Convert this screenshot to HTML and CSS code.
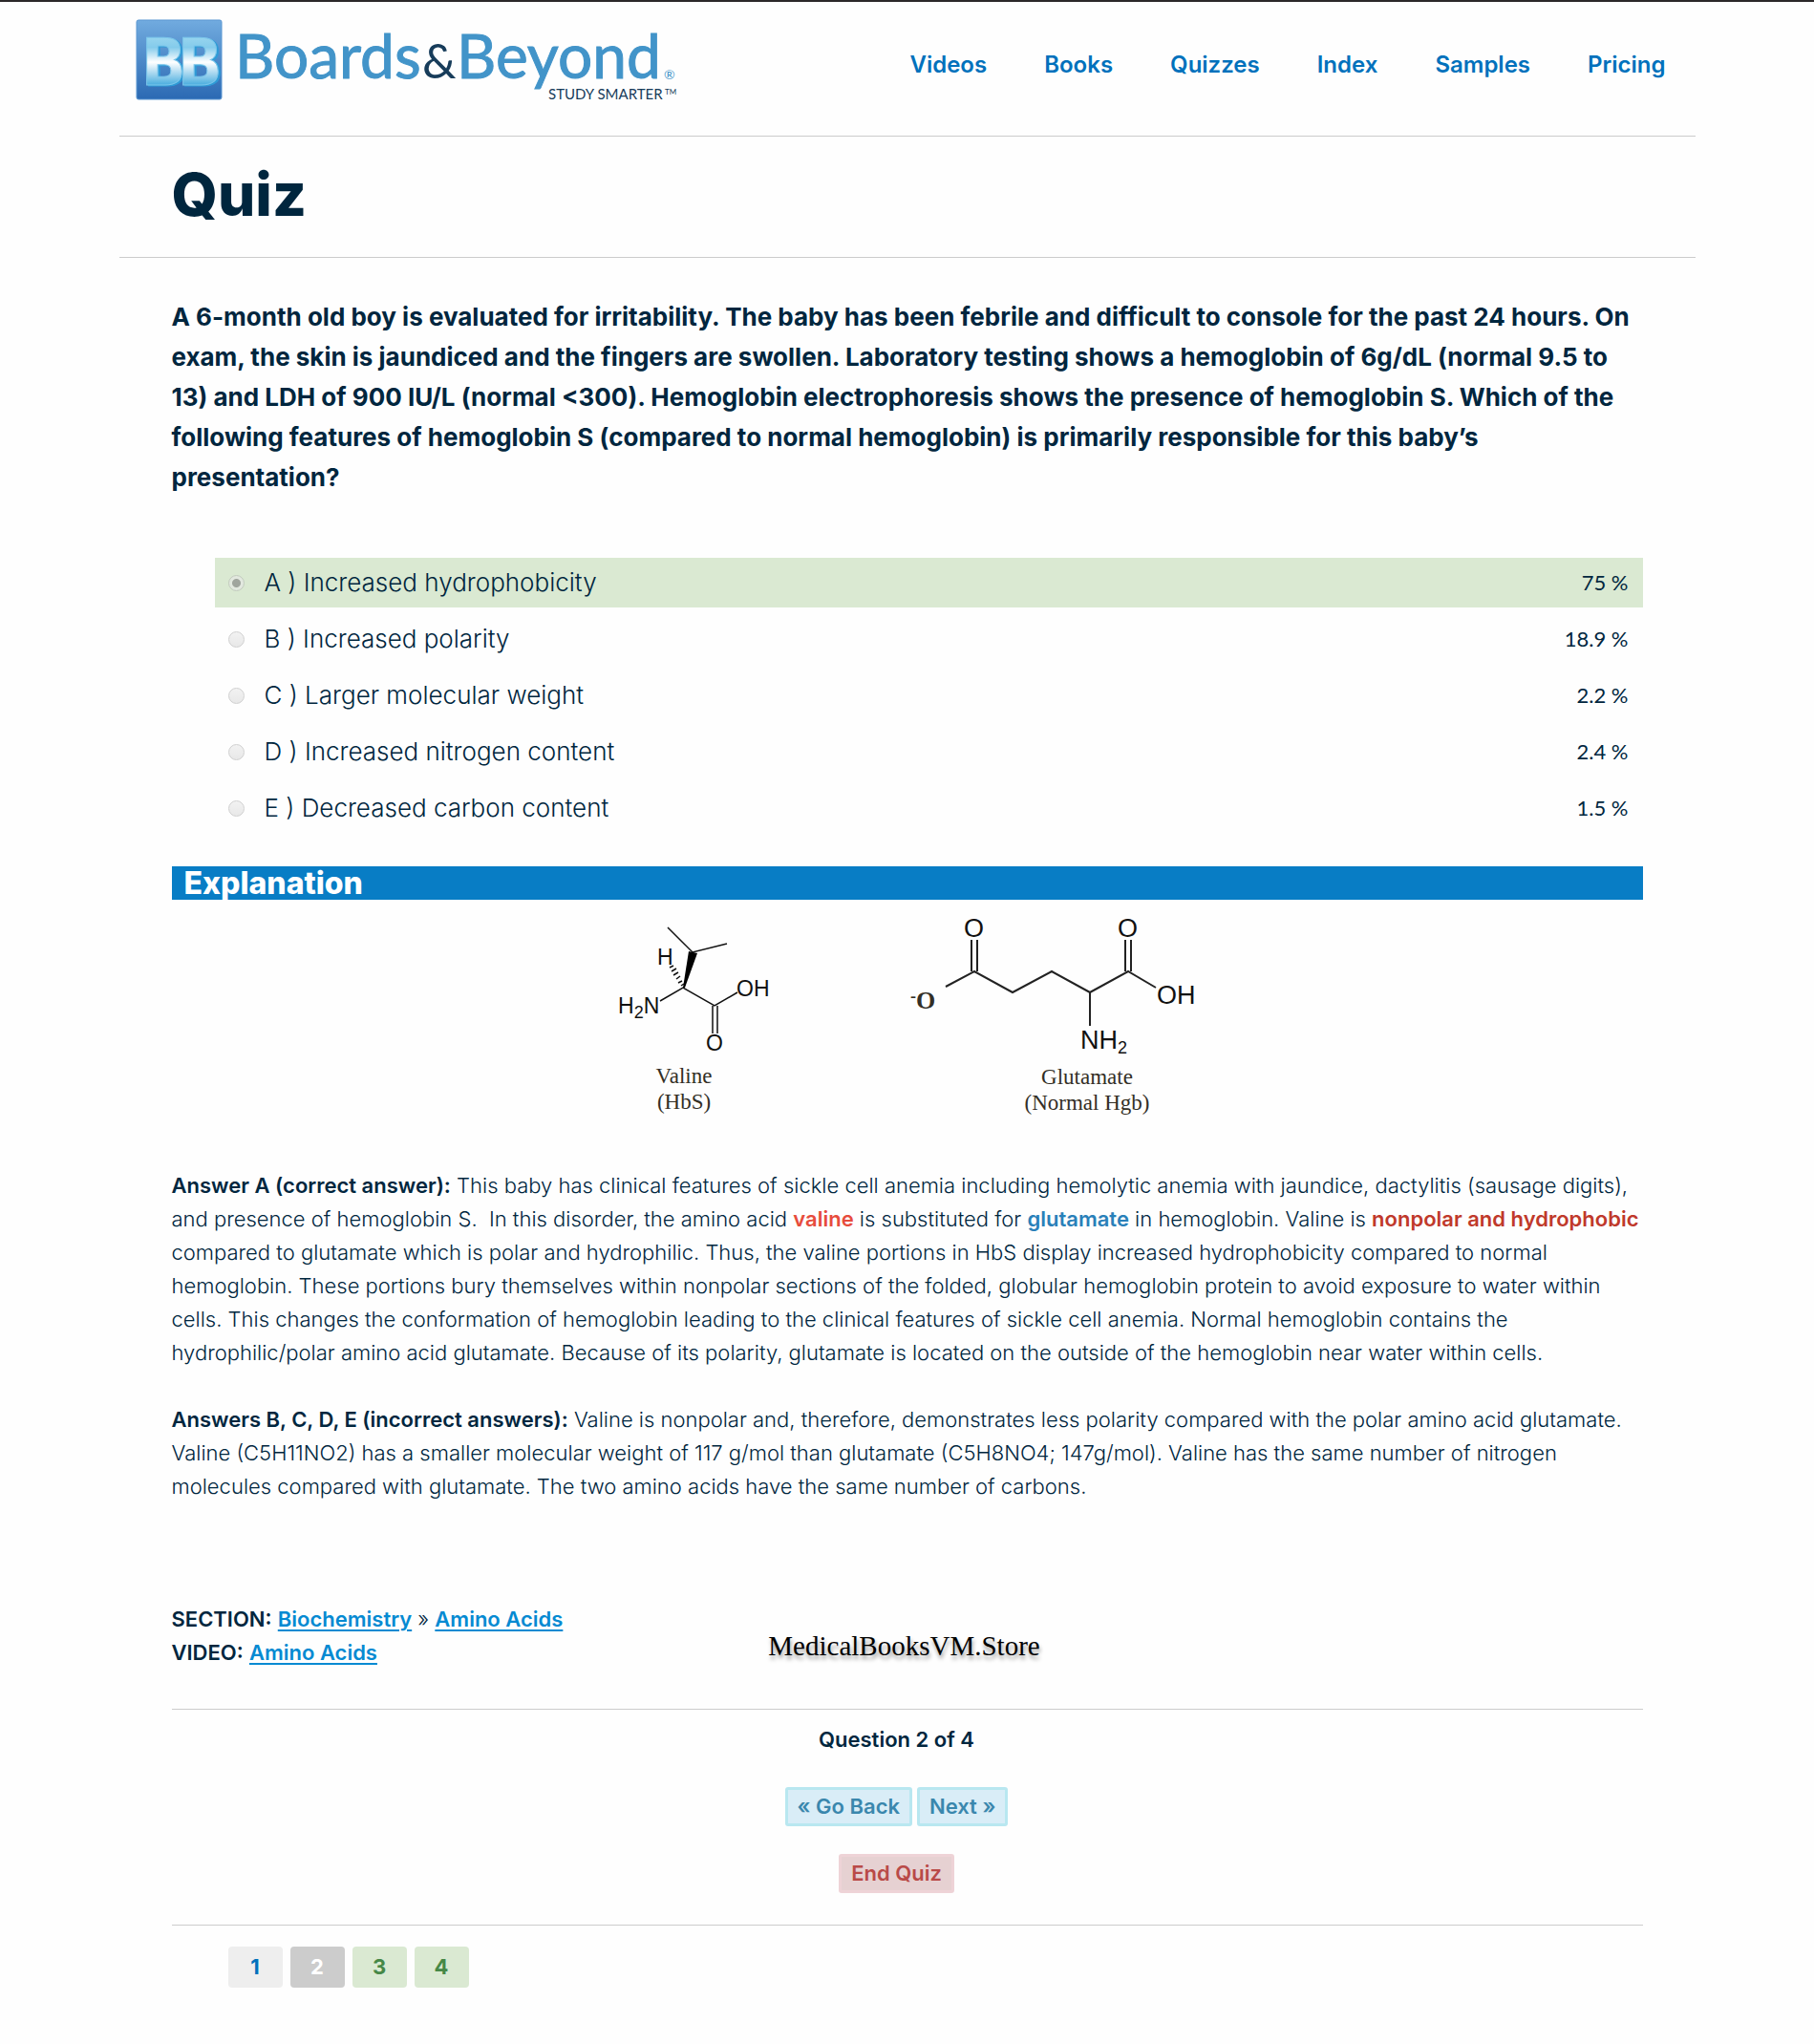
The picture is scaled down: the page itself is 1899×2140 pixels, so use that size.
FILE: index.html
```html
<!DOCTYPE html>
<html lang="en">
<head>
<meta charset="utf-8">
<meta name="viewport" content="width=device-width, initial-scale=1">
<title>Quiz - Boards &amp; Beyond</title>
<link rel="stylesheet" href="styles.css">
</head>
<body>
<div class="page">
  <header class="site-header">
    <a class="logo" href="#" aria-label="Boards and Beyond, study smarter">
      <svg width="568" height="104" viewBox="0 0 568 104">
        <defs>
          <linearGradient id="tile" x1="0" y1="0" x2="0" y2="1">
            <stop offset="0" stop-color="#71abdf"/>
            <stop offset="1" stop-color="#2b69b3"/>
          </linearGradient>
          <linearGradient id="letter" gradientUnits="userSpaceOnUse" x1="0" y1="16" x2="0" y2="78">
            <stop offset="0" stop-color="#a5dcf1"/>
            <stop offset="0.3" stop-color="#84cbeb"/>
            <stop offset="0.55" stop-color="#ffffff"/>
            <stop offset="1" stop-color="#2b9fd9"/>
          </linearGradient>
        </defs>
        <rect x="1" y="6" width="89" height="83" rx="2" fill="url(#tile)" stroke="#5b97d2"/>
        <text class="logo-bb" x="6" y="74" fill="url(#letter)">B</text>
        <text class="logo-bb" x="44" y="74" fill="url(#letter)">B</text>
        <text class="logo-name" x="104" y="67">Boards</text>
        <text class="logo-amp" x="300" y="67">&amp;</text>
        <text class="logo-name" x="336" y="67">Beyond</text>
        <text class="logo-reg" x="553" y="68">®</text>
        <text class="logo-tag" x="432" y="89">STUDY SMARTER</text>
        <text class="logo-tm" x="554" y="84">TM</text>
      </svg>
    </a>
    <nav class="site-nav" aria-label="Main">
      <a href="#">Videos</a>
      <a href="#">Books</a>
      <a href="#">Quizzes</a>
      <a href="#">Index</a>
      <a href="#">Samples</a>
      <a href="#">Pricing</a>
    </nav>
  </header>

  <h1 class="page-title">Quiz</h1>

  <main class="content">
    <p class="question">A 6-month old boy is evaluated for irritability. The baby has been febrile and difficult to console for the past 24 hours. On exam, the skin is jaundiced and the fingers are swollen. Laboratory testing shows a hemoglobin of 6g/dL (normal 9.5 to 13) and LDH of 900 IU/L (normal &lt;300). Hemoglobin electrophoresis shows the presence of hemoglobin S. Which of the following features of hemoglobin S (compared to normal hemoglobin) is primarily responsible for this baby’s presentation?</p>

    <div class="options" role="radiogroup" aria-label="Answers">
      <div class="option option-correct">
        <input type="radio" name="answer" id="a" checked disabled>
        <label for="a">A ) Increased hydrophobicity</label>
        <span class="percent">75 %</span>
      </div>
      <div class="option">
        <input type="radio" name="answer" id="b" disabled>
        <label for="b">B ) Increased polarity</label>
        <span class="percent">18.9 %</span>
      </div>
      <div class="option">
        <input type="radio" name="answer" id="c" disabled>
        <label for="c">C ) Larger molecular weight</label>
        <span class="percent">2.2 %</span>
      </div>
      <div class="option">
        <input type="radio" name="answer" id="d" disabled>
        <label for="d">D ) Increased nitrogen content</label>
        <span class="percent">2.4 %</span>
      </div>
      <div class="option">
        <input type="radio" name="answer" id="e" disabled>
        <label for="e">E ) Decreased carbon content</label>
        <span class="percent">1.5 %</span>
      </div>
    </div>

    <h2 class="explanation-title">Explanation</h2>

    <svg class="molecules" width="660" height="240" viewBox="620 942 660 240" role="img" aria-label="Structures of valine and glutamate">
      <g class="bonds bonds-thin">
        <path d="M699 971L725 997L761 988M691 1048L715 1034L748 1053L772 1039M746 1053V1082M751 1053V1082"/>
        <path d="M701 1013l4-2M703 1017l5-3M705 1021l5-3M708 1025l4-3M710 1029l4-2M713 1032l3-2"/>
      </g>
      <path d="M715 1034L721 996L730 998L717 1034Z"/>
      <g class="atoms atoms-small">
        <text x="688" y="1010">H</text>
        <text x="771" y="1043">OH</text>
        <text x="647" y="1061">H<tspan class="sub" dy="5">2</tspan><tspan dy="-5">N</tspan></text>
        <text x="739" y="1100">O</text>
      </g>
      <g class="bonds">
        <path d="M990 1033L1020 1017L1060 1039L1101 1017L1141 1039L1181 1017L1210 1034M1141 1039V1074M1017 1017V984M1023 1017V984M1178 1017V984M1184 1017V984"/>
      </g>
      <g class="atoms">
        <text x="1009" y="981">O</text>
        <text x="1170" y="981">O</text>
        <text x="1211" y="1051">OH</text>
        <text x="1131" y="1098">NH<tspan class="sub" dy="5">2</tspan></text>
      </g>
      <g class="captions">
        <text class="anion" x="953" y="1049">-</text>
        <text class="oxygen" x="959" y="1056">O</text>
        <text class="centered" x="716" y="1134">Valine</text>
        <text class="centered" x="716" y="1161">(HbS)</text>
        <text class="centered" x="1138" y="1135">Glutamate</text>
        <text class="centered" x="1138" y="1162">(Normal Hgb)</text>
      </g>
    </svg>

    <div class="explanation">
      <p><b>Answer A (correct answer):</b> This baby has clinical features of sickle cell anemia including hemolytic anemia with jaundice, dactylitis (sausage digits), and presence of hemoglobin S.&nbsp; In this disorder, the amino acid <b class="valine">valine</b> is substituted for <b class="glutamate">glutamate</b> in hemoglobin. Valine is <b class="nonpolar">nonpolar and hydrophobic</b> compared to glutamate which is polar and hydrophilic. Thus, the valine portions in HbS display increased hydrophobicity compared to normal hemoglobin. These portions bury themselves within nonpolar sections of the folded, globular hemoglobin protein to avoid exposure to water within cells. This changes the conformation of hemoglobin leading to the clinical features of sickle cell anemia. Normal hemoglobin contains the hydrophilic/polar amino acid glutamate. Because of its polarity, glutamate is located on the outside of the hemoglobin near water within cells.</p>
      <p><b>Answers B, C, D, E (incorrect answers):</b> Valine is nonpolar and, therefore, demonstrates less polarity compared with the polar amino acid glutamate. Valine (C5H11NO2) has a smaller molecular weight of 117 g/mol than glutamate (C5H8NO4; 147g/mol). Valine has the same number of nitrogen molecules compared with glutamate. The two amino acids have the same number of carbons.</p>
    </div>

    <div class="source">
      <div class="source-links">
        <div><b>SECTION:</b> <a href="#">Biochemistry</a> » <a href="#">Amino Acids</a></div>
        <div><b>VIDEO:</b> <a href="#">Amino Acids</a></div>
      </div>
      <p class="store">MedicalBooksVM.Store</p>
    </div>

    <div class="controls">
      <p class="progress">Question 2 of 4</p>
      <div class="steps">
        <button type="button" class="button">« Go Back</button>
        <button type="button" class="button">Next »</button>
      </div>
      <button type="button" class="button button-end">End Quiz</button>
    </div>

    <nav class="pager" aria-label="Questions">
      <a href="#">1</a>
      <a class="current" href="#" aria-current="page">2</a>
      <a class="correct" href="#">3</a>
      <a class="correct" href="#">4</a>
    </nav>
  </main>
</div>
</body>
</html>
```
FILE: styles.css
```css
* {
  box-sizing: border-box;
}

body {
  margin: 0;
  border-top: 2px solid #2b2829;
  background: #fefefe;
  color: #00263e;
  font-family: Inter, "Liberation Sans", sans-serif;
  font-size: 22px;
  font-weight: 300;
  line-height: 35px;
}

h1, h2, p {
  margin: 0;
}

b {
  font-weight: 600;
}

.page {
  max-width: 1650px;
  margin: 0 auto;
}

/* Header */
.site-header {
  display: flex;
  justify-content: space-between;
  align-items: center;
  min-height: 141px;
  padding: 0 31px 10px 17px;
  border-bottom: 1px solid #ccc;
}

.logo svg {
  display: block;
}

.logo-bb {
  font: 700 68px "Liberation Sans Narrow", "DejaVu Sans Condensed", sans-serif;
  stroke: #7cc6ea;
  stroke-width: 1px;
  filter: drop-shadow(2px 1px 0 #2f9bd6);
}

.logo-name {
  font: 400 64px Lato, sans-serif;
  fill: #4294c9;
  stroke: #4294c9;
  stroke-width: 1px;
}

.logo-amp {
  font: 400 50px Lato, sans-serif;
  fill: #173c5a;
}

.logo-reg {
  font: 400 14px Lato, sans-serif;
  fill: #4294c9;
}

.logo-tag {
  font: 400 15px Lato, sans-serif;
  fill: #173c5a;
}

.logo-tm {
  font: 400 8px Lato, sans-serif;
  fill: #173c5a;
}

.site-nav {
  display: flex;
  gap: 60px;
  font-size: 24px;
  font-weight: 600;
}

.site-nav a {
  color: #0071bc;
  text-decoration: none;
}

.page-title {
  padding: 29px 55px 33px;
  border-bottom: 1px solid #ccc;
  font-size: 62px;
  font-weight: 800;
  line-height: 64px;
}

/* Question */
.content {
  padding: 41px 55px 59px;
}

.question {
  font-size: 26px;
  font-weight: 700;
  line-height: 42px;
}

.options {
  display: grid;
  gap: 7px;
  margin: 63px 0 35px 45px;
}

.option {
  display: flex;
  align-items: center;
  padding: 0 15px 0 14px;
  font-size: 26px;
  line-height: 52px;
}

.option-correct {
  background: #dae9d2;
}

.option input {
  appearance: none;
  width: 17px;
  height: 17px;
  margin: 0 21px 0 0;
  border: 1px solid #d0d0d0;
  border-radius: 50%;
  background: linear-gradient(#f2f2f2, #e8e8e8);
}

.option input:checked {
  border-color: #c2cbbe;
  background: radial-gradient(circle, #a0a59e 4px, #e2e8df 5px);
}

.percent {
  margin-left: auto;
  font-family: Lato, sans-serif;
  font-size: 22px;
  font-weight: 400;
  line-height: 50px;
}

/* Explanation */
.explanation-title {
  padding: 0 13px;
  background: #087dc5;
  color: #fff;
  font-size: 32px;
  font-weight: 800;
  line-height: 35px;
}

.molecules {
  display: block;
  max-width: 100%;
  margin: 0 auto 42px;
}

.bonds {
  fill: none;
  stroke: #222;
  stroke-width: 2px;
}

.bonds-thin {
  stroke: #111;
  stroke-width: 1.5px;
}

.atoms {
  font-family: "Liberation Sans", sans-serif;
  font-size: 27px;
  font-weight: 400;
  fill: #111;
}

.atoms-small {
  font-size: 23px;
}

.sub {
  font-size: 18px;
}

.captions {
  font-family: "Liberation Serif", serif;
  font-size: 23px;
  font-weight: 400;
  fill: #332f26;
}

.centered {
  text-anchor: middle;
}

.anion,
.oxygen {
  font-size: 26px;
  font-weight: 700;
}

.anion {
  font-size: 18px;
}

.explanation {
  display: grid;
  gap: 35px;
}

.valine {
  color: #e74c3c;
}

.glutamate {
  color: #2980b9;
}

.nonpolar {
  color: #c0392b;
}

/* Source links */
.source {
  display: grid;
  grid-template-columns: 1fr auto 1fr;
  padding: 104px 6px 41px 0;
  border-bottom: 1px solid #ccc;
}

.source a {
  color: #058ad2;
  font-weight: 600;
  text-decoration-thickness: 2px;
  text-underline-offset: 3px;
}

.store {
  align-self: center;
  padding-top: 20px;
  color: #000;
  font-family: "Liberation Serif", serif;
  font-size: 29px;
  font-weight: 400;
  text-shadow: 1px 4px 4px rgba(0, 0, 0, 0.4);
}

/* Quiz controls */
.controls {
  display: flex;
  flex-direction: column;
  align-items: center;
  padding: 14px 22px 33px 0;
  border-bottom: 1px solid #ccc;
}

.progress {
  font-weight: 600;
}

.steps {
  display: flex;
  gap: 5px;
  margin: 32px 0 29px;
}

.button {
  height: 41px;
  padding: 0 10px;
  border: 3px solid #b8e7f0;
  border-radius: 3px;
  background: #d9edf7;
  color: #3a87ad;
  font: inherit;
  font-weight: 600;
}

.button-end {
  border-color: #eed3d7;
  background: #e6d1d2;
  color: #b94a48;
}

.pager {
  display: flex;
  gap: 8px;
  margin: 22px 0 0 59px;
}

.pager a {
  width: 57px;
  border-radius: 4px;
  background: #eee;
  color: #0071bc;
  font-weight: 700;
  line-height: 43px;
  text-align: center;
  text-decoration: none;
}

.pager .current {
  background: #ccc;
  color: #fff;
}

.pager .correct {
  background: #dae9d2;
  color: #468847;
}
```
